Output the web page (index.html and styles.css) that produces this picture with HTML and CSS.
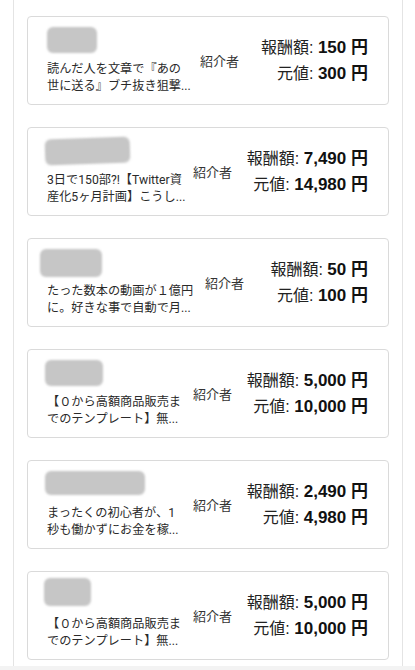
FILE: index.html
```html
<!DOCTYPE html>
<html lang="ja">
<head>
    <meta charset="UTF-8">
    <meta name="viewport" content="width=device-width, initial-scale=1.0">
    <title>紹介一覧</title>
    <link rel="stylesheet" href="styles.css">
</head>
<body>
    <div class="list">
        <div class="offer">
            <div class="info info--wide">
                <div class="avatar avatar--1"></div>
                <div class="title">
                    <span>読んだ人を文章で『あの</span>
                    <span>世に送る』ブチ抜き狙撃...</span>
                </div>
            </div>
            <div class="role">紹介者</div>
            <div class="price">
                <div>報酬額: <b>150 円</b></div>
                <div>元値: <b>300 円</b></div>
            </div>
        </div>

        <div class="offer">
            <div class="info">
                <div class="avatar avatar--2"></div>
                <div class="title">
                    <span>3日で150部?!【Twitter資</span>
                    <span>産化5ヶ月計画】こうし...</span>
                </div>
            </div>
            <div class="role">紹介者</div>
            <div class="price">
                <div>報酬額: <b>7,490 円</b></div>
                <div>元値: <b>14,980 円</b></div>
            </div>
        </div>

        <div class="offer">
            <div class="info info--wider">
                <div class="avatar avatar--3"></div>
                <div class="title">
                    <span>たった数本の動画が１億円</span>
                    <span>に。好きな事で自動で月...</span>
                </div>
            </div>
            <div class="role">紹介者</div>
            <div class="price">
                <div>報酬額: <b>50 円</b></div>
                <div>元値: <b>100 円</b></div>
            </div>
        </div>

        <div class="offer">
            <div class="info">
                <div class="avatar avatar--4"></div>
                <div class="title">
                    <span>【０から高額商品販売ま</span>
                    <span>でのテンプレート】無...</span>
                </div>
            </div>
            <div class="role">紹介者</div>
            <div class="price">
                <div>報酬額: <b>5,000 円</b></div>
                <div>元値: <b>10,000 円</b></div>
            </div>
        </div>

        <div class="offer">
            <div class="info">
                <div class="avatar avatar--5"></div>
                <div class="title">
                    <span>まったくの初心者が、1</span>
                    <span>秒も働かずにお金を稼...</span>
                </div>
            </div>
            <div class="role">紹介者</div>
            <div class="price">
                <div>報酬額: <b>2,490 円</b></div>
                <div>元値: <b>4,980 円</b></div>
            </div>
        </div>

        <div class="offer">
            <div class="info">
                <div class="avatar avatar--6"></div>
                <div class="title">
                    <span>【０から高額商品販売ま</span>
                    <span>でのテンプレート】無...</span>
                </div>
            </div>
            <div class="role">紹介者</div>
            <div class="price">
                <div>報酬額: <b>5,000 円</b></div>
                <div>元値: <b>10,000 円</b></div>
            </div>
        </div>
    </div>
    <div class="footer"></div>
</body>
</html>
```

FILE: styles.css
```css
body {
    margin: 0;
    background: #fff;
    color: #222;
    font-family: Roboto, "Noto Sans CJK JP", sans-serif;
}

.list {
    width: 390px;
    box-sizing: border-box;
    margin-left: 13px;
    padding: 16px 13px 6px;
    border-left: 1px solid #e4e4e4;
    border-right: 1px solid #e4e4e4;
    display: flex;
    flex-direction: column;
    gap: 22px;
}

.offer {
    display: flex;
    align-items: center;
    height: 89px;
    box-sizing: border-box;
    padding: 0 20px 0 19px;
    border: 1px solid #dadada;
    border-radius: 4px;
}

.info {
    flex: none;
    width: 146px;
    display: flex;
    flex-direction: column;
}

.info--wide {
    width: 153px;
}

.info--wider {
    width: 158px;
}

.avatar {
    height: 26px;
    width: 50px;
    margin-bottom: 8px;
    background: #c6c6c6;
    border-radius: 6px;
    filter: blur(1.2px);
}

.avatar--2 {
    width: 85px;
    margin-left: -2px;
    transform: rotate(-2deg);
}

.avatar--3 {
    width: 62px;
    height: 28px;
    margin-left: -7px;
    margin-bottom: 6px;
}

.avatar--4 {
    width: 58px;
    margin-left: -2px;
}

.avatar--5 {
    width: 100px;
    height: 24px;
    margin-left: -2px;
    margin-bottom: 10px;
}

.avatar--6 {
    width: 47px;
    height: 28px;
    margin-left: -3px;
    margin-top: -4px;
    margin-bottom: 10px;
}

.title {
    font-size: 12.2px;
    line-height: 17px;
    color: #2a2a2a;
}

.title span {
    display: block;
    white-space: nowrap;
}

.role {
    font-size: 13px;
    color: #333;
    white-space: nowrap;
}

.price {
    margin-left: auto;
    text-align: right;
    font-family: "Liberation Sans", "Noto Sans CJK JP", sans-serif;
    font-size: 16px;
    line-height: 26px;
    color: #222;
    white-space: nowrap;
}

.price b {
    color: #111;
    font-size: 17px;
    font-weight: 700;
}

.footer {
    height: 10px;
    background: #f3f3f3;
}
```
